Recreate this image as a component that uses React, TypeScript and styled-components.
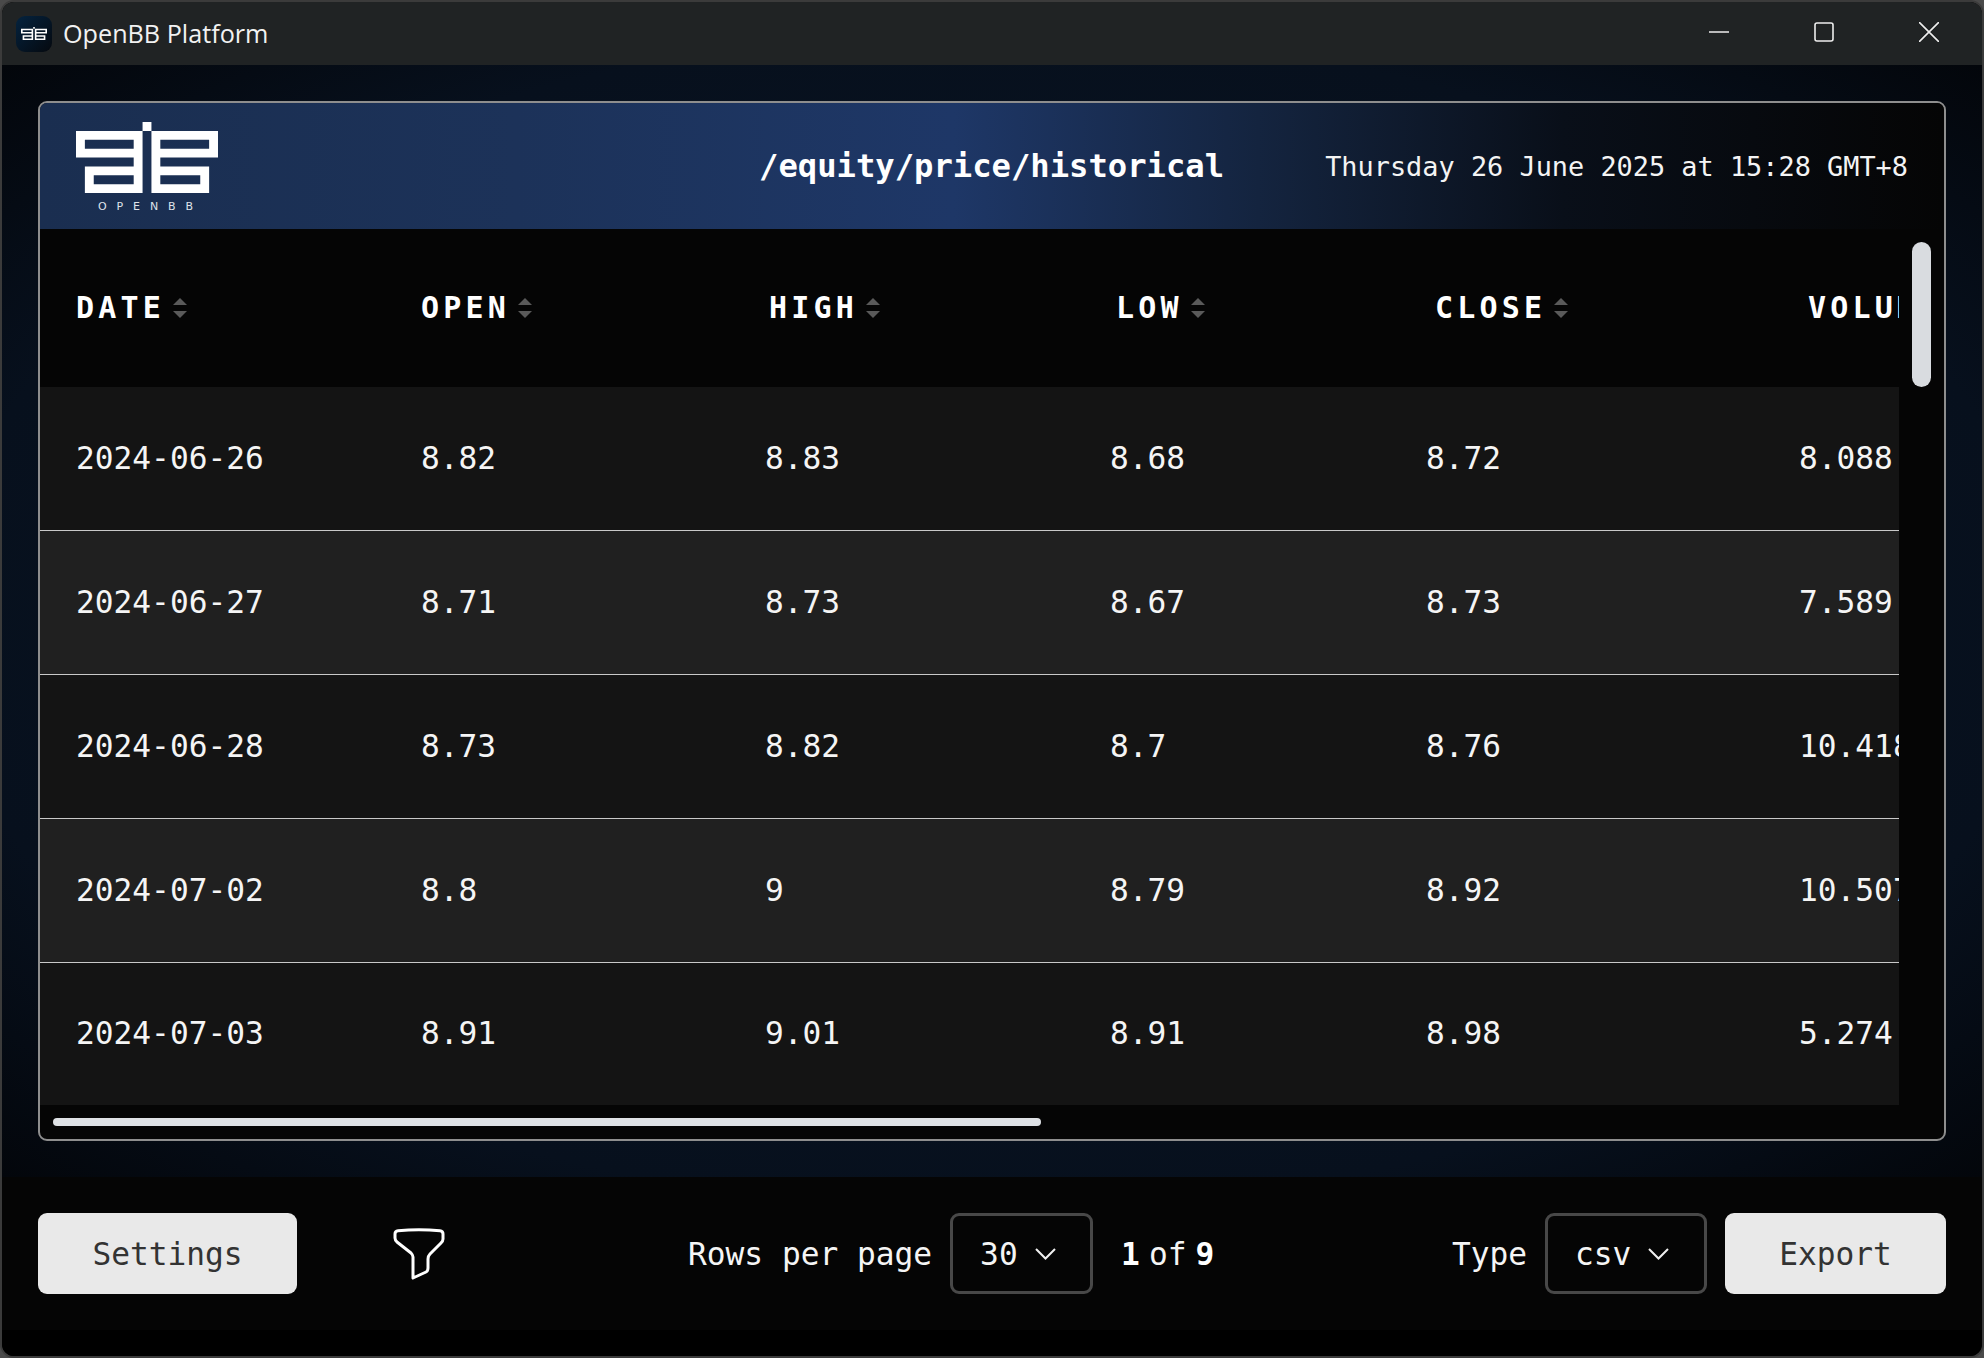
import styled, { createGlobalStyle } from "styled-components";

const mono = `"DejaVu Sans Mono", "Liberation Mono", monospace`;

const GlobalStyle = createGlobalStyle`
    html, body {
        margin: 0;
        padding: 0;
        background: #4a4a4a;
    }
    * {
        box-sizing: border-box;
    }
`

const Window = styled.div`
    width: 1984px;
    height: 1358px;
    display: flex;
    flex-direction: column;
    overflow: hidden;
    border: 2px solid #3b3b3b;
    border-radius: 14px;
    background: #000;
    color: #fff;
    font-family: ${mono};
`

const TitleBar = styled.div`
    flex: 0 0 63px;
    display: flex;
    align-items: center;
    padding: 0 43px 0 14px;
    background: #202324;
`

const AppIcon = styled.div`
    width: 36px;
    height: 36px;
    display: flex;
    align-items: center;
    justify-content: center;
    border-radius: 9px;
    background: linear-gradient(135deg, #04233f, #05090f);
`

const AppTitle = styled.div`
    margin: 0 0 2px 11px;
    font-family: "Open Sans", "Noto Sans", sans-serif;
    font-size: 25.2px;
    color: #f2f2f2;
`

const WindowButtons = styled.div`
    margin: 0 0 4px auto;
    display: flex;
    align-items: center;
    gap: 85px;
`

const Content = styled.div`
    flex: 0 0 1112px;
    padding: 36px 36px 36px;
    background: radial-gradient(ellipse at 50% 50%, #0a1728 0%, #07101d 75%, #03060b 100%);
`

const Panel = styled.div`
    height: 100%;
    display: flex;
    flex-direction: column;
    overflow: hidden;
    border: 2px solid #8e8e8e;
    border-radius: 9px;
    background: #050505;
`

const PanelHeader = styled.div`
    flex: 0 0 126px;
    display: flex;
    align-items: center;
    padding: 0 36px;
    background: linear-gradient(90deg, #1a2e50 0%, #1c3259 25%, #1e3767 48%, #14243f 64%, #090f19 80%, #050505 100%);
`

const Brand = styled.div`
    display: flex;
    flex-direction: column;
    align-items: flex-start;
    width: 144px;
`

const BrandName = styled.div`
    margin: 9px 0 0 22px;
    font-family: "DejaVu Sans", sans-serif;
    font-size: 11px;
    line-height: 9px;
    letter-spacing: 9.9px;
    color: #dfe3ea;
`

const RoutePath = styled.div`
    margin-left: 539px;
    font-size: 32.2px;
    font-weight: 700;
`

const Timestamp = styled.div`
    margin-left: auto;
    font-size: 26.9px;
    color: #f4f4f4;
`

const PanelBody = styled.div`
    flex: 1;
    display: flex;
    min-height: 0;
`

const TableViewport = styled.div`
    flex: 0 0 1859px;
    overflow: hidden;
`

const HeadRow = styled.div`
    height: 158px;
    display: grid;
    grid-template-columns: 345px 344px 345px 316px 373px 136px;
    align-items: center;
`

const HeadCell = styled.div<{ $offset: number }>`
    display: flex;
    align-items: center;
    gap: 8px;
    padding: 0 0 1px ${p => p.$offset}px;
    font-size: 30px;
    font-weight: 700;
    letter-spacing: 4.2px;
    white-space: nowrap;
`

const Row = styled.div<{ $even: boolean }>`
    height: 144px;
    display: grid;
    grid-template-columns: 345px 344px 345px 316px 373px 136px;
    align-items: center;
    border-bottom: 1.5px solid #c9c9c9;
    background: ${p => p.$even ? '#202020' : '#141414'};

    &:last-child {
        height: 142px;
        border-bottom: 0;
    }
`

const Cell = styled.div`
    padding: 0 0 2px 36px;
    font-size: 31.2px;
    color: #f5f5f5;
    white-space: nowrap;
    overflow: hidden;
`

const VerticalTrack = styled.div`
    flex: 1;
    padding: 13px 0 0 13px;
`

const VerticalThumb = styled.div`
    width: 19px;
    height: 145px;
    border-radius: 10px;
    background: #d9dce0;
`

const HorizontalTrack = styled.div`
    flex: 0 0 34px;
    padding: 13px 0 0 13px;
`

const HorizontalThumb = styled.div`
    width: 988px;
    height: 8px;
    border-radius: 4px;
    background: #dee1e5;
`

const Footer = styled.div`
    flex: 0 0 153px;
    display: grid;
    grid-template-columns: 650px 763px 1fr;
    align-items: center;
    padding: 0 36px;
    background: #050505;
`

const FooterGroup = styled.div<{ $end?: boolean }>`
    display: flex;
    align-items: center;
    justify-content: ${p => p.$end ? 'flex-end' : 'flex-start'};
`

const LightButton = styled.button<{ $width: number }>`
    width: ${p => p.$width}px;
    height: 81px;
    border: 0;
    border-radius: 9px;
    background: #e9e9e9;
    color: #333;
    font-family: ${mono};
    font-size: 31.2px;
    padding: 0;
`

const FilterButton = styled.div`
    margin-left: 96px;
    display: flex;
`

const Label = styled.span`
    margin-right: 18px;
    font-size: 31.2px;
    color: #f5f5f5;
    white-space: nowrap;
`

const Select = styled.div<{ $width: number }>`
    width: ${p => p.$width}px;
    height: 81px;
    display: flex;
    align-items: center;
    gap: 17px;
    padding-left: 27px;
    border: 3px solid #484848;
    border-radius: 9px;
    font-size: 31.2px;
    color: #f5f5f5;
`

const PageCount = styled.div`
    margin-left: 28px;
    display: flex;
    gap: 9px;
    font-size: 31.2px;
    color: #f5f5f5;

    b {
        color: #fff;
    }
`

const ExportGap = styled.div`
    width: 18px;
`

const BottomStrip = styled.div`
    flex: 1;
    background: #000;
`

const rows = [
    ['2024-06-26', '8.82', '8.83', '8.68', '8.72', '8.088'],
    ['2024-06-27', '8.71', '8.73', '8.67', '8.73', '7.589'],
    ['2024-06-28', '8.73', '8.82', '8.7', '8.76', '10.418'],
    ['2024-07-02', '8.8', '9', '8.79', '8.92', '10.507'],
    ['2024-07-03', '8.91', '9.01', '8.91', '8.98', '5.274'],
]

const headers = [
    { name: 'DATE', offset: 36 },
    { name: 'OPEN', offset: 36 },
    { name: 'HIGH', offset: 40 },
    { name: 'LOW', offset: 42 },
    { name: 'CLOSE', offset: 45 },
    { name: 'VOLUME', offset: 45 },
]

const Logo = ({ width }: { width: number }) => (
    <svg width={width} height={width / 2} viewBox="0 0 16 8" fill="#fff" fillRule="evenodd">
        <path d="M7.5 0h1v1h-1z" />
        <path d="M0 1h7.500v7H1V5h5.500V4H0zM1 2v1h5.500V2zM2 6v1h4.500V6z" />
        <path d="M8.500 1H16v3H9.500v1H15v3H8.500zM9.500 2v1H15V2zM9.500 6v1H14V6z" />
    </svg>
)

const SortIcon = () => (
    <svg width="14" height="20" viewBox="0 0 14 20" fill="#5a5a5a">
        <path d="M7 0l7 7H0z" />
        <path d="M0 13h14l-7 7z" />
    </svg>
)

const Chevron = () => (
    <svg width="21" height="12" viewBox="0 0 21 12" fill="none" stroke="#f0f0f0" strokeWidth="2">
        <path d="M1 1l9.500 9.500L20 1" />
    </svg>
)

const Funnel = () => (
    <svg width="52" height="52" viewBox="0 0 52 52" fill="none" stroke="#fff" strokeWidth="3" strokeLinejoin="round">
        <path d="M2 6q0-3 3-3.300 21-2 42 0 3 .3 3 3.300v5q0 2-2 4L37 26q-2 2-2 5v9q0 3-2 4l-13 6V29q0-2-2-4L4 14q-2-2-2-4z" />
    </svg>
)

export default function App() {
    return (
        <>
            <GlobalStyle />
            <Window>
                <TitleBar>
                    <AppIcon>
                        <Logo width={26} />
                    </AppIcon>
                    <AppTitle>OpenBB Platform</AppTitle>
                    <WindowButtons>
                        <svg width="20" height="20" viewBox="0 0 20 20" stroke="#eee" strokeWidth="1.6"><path d="M0 10h20" /></svg>
                        <svg width="20" height="20" viewBox="0 0 20 20" fill="none" stroke="#eee" strokeWidth="1.6"><rect x="1" y="1" width="18" height="18" rx="2" /></svg>
                        <svg width="20" height="20" viewBox="0 0 20 20" stroke="#eee" strokeWidth="1.6"><path d="M0 0l20 20M20 0L0 20" /></svg>
                    </WindowButtons>
                </TitleBar>
                <Content>
                    <Panel>
                        <PanelHeader>
                            <Brand>
                                <Logo width={142} />
                                <BrandName>OPENBB</BrandName>
                            </Brand>
                            <RoutePath>/equity/price/historical</RoutePath>
                            <Timestamp>Thursday 26 June 2025 at 15:28 GMT+8</Timestamp>
                        </PanelHeader>
                        <PanelBody>
                            <TableViewport>
                                <HeadRow>
                                    {headers.map(h => (
                                        <HeadCell key={h.name} $offset={h.offset}>
                                            {h.name}
                                            <SortIcon />
                                        </HeadCell>
                                    ))}
                                </HeadRow>
                                {rows.map((row, i) => (
                                    <Row key={row[0]} $even={i % 2 === 1}>
                                        {row.map((value, j) => <Cell key={j}>{value}</Cell>)}
                                    </Row>
                                ))}
                            </TableViewport>
                            <VerticalTrack>
                                <VerticalThumb />
                            </VerticalTrack>
                        </PanelBody>
                        <HorizontalTrack>
                            <HorizontalThumb />
                        </HorizontalTrack>
                    </Panel>
                </Content>
                <Footer>
                    <FooterGroup>
                        <LightButton $width={259}>Settings</LightButton>
                        <FilterButton>
                            <Funnel />
                        </FilterButton>
                    </FooterGroup>
                    <FooterGroup>
                        <Label>Rows per page</Label>
                        <Select $width={143}>
                            30
                            <Chevron />
                        </Select>
                        <PageCount>
                            <b>1</b>
                            <span>of</span>
                            <b>9</b>
                        </PageCount>
                    </FooterGroup>
                    <FooterGroup $end>
                        <Label>Type</Label>
                        <Select $width={162}>
                            csv
                            <Chevron />
                        </Select>
                        <ExportGap />
                        <LightButton $width={221}>Export</LightButton>
                    </FooterGroup>
                </Footer>
                <BottomStrip />
            </Window>
        </>
    )
}
